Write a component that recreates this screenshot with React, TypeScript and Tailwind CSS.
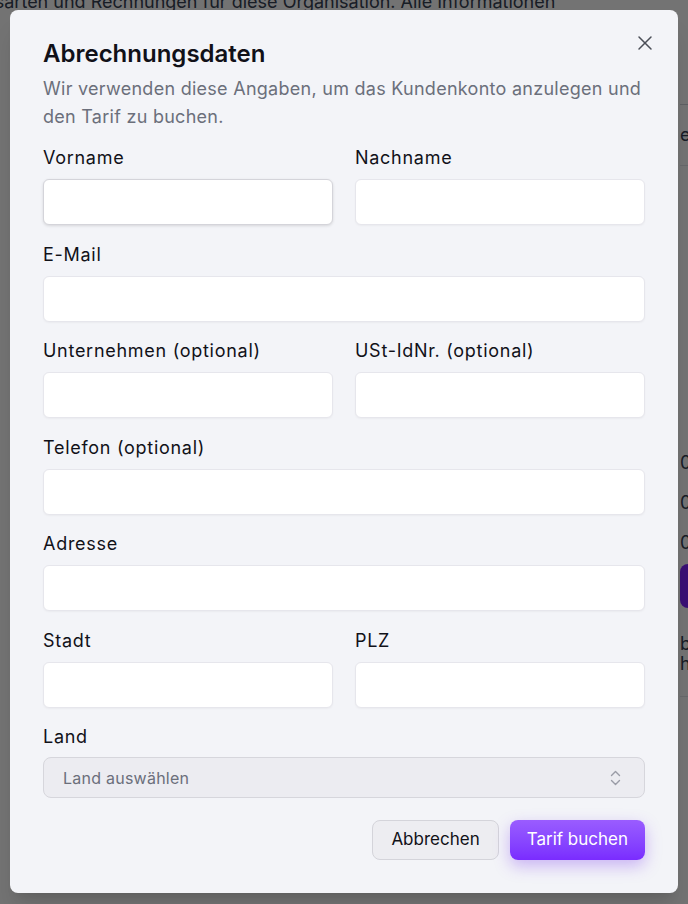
import { X } from "lucide-react";

function Field({ label, focused }: { label: string; focused?: boolean }) {
  return (
    <label className="flex flex-col gap-[7px]">
      <span className="text-lg leading-7 tracking-[0.04em] text-[#111118]">{label}</span>
      <input
        className={
          "h-[46px] w-full rounded-md bg-white px-3 text-base outline-none " +
          (focused
            ? "border border-[#d4d4da] shadow-[0_1px_3px_rgba(0,0,0,0.12)]"
            : "border border-[#e6e6ec] shadow-[0_1px_2px_rgba(0,0,0,0.04)]")
        }
      />
    </label>
  );
}

export default function App() {
  return (
    <div className="relative h-[904px] overflow-hidden bg-white font-['Inter','Liberation_Sans',sans-serif]">
      {/* page behind the dialog */}
      <div className="flex">
        <div className="w-[600px] shrink-0">
          <p className="-mt-[12px] -ml-[74px] whitespace-nowrap text-lg text-gray-700">
            Zahlungsarten und Rechnungen für diese Organisation. Alle Informationen
          </p>
        </div>
        <aside className="w-[300px] shrink-0 pl-[80px] text-gray-700">
          <div className="h-[105px] border-b border-gray-300" />
          <div className="py-[16px] text-lg leading-7">enthalten</div>
          <div className="border-b border-gray-200" />
          <div className="mt-[277px] flex flex-col">
            <div className="h-10 text-lg leading-10">0€</div>
            <div className="h-10 text-lg leading-10">0€</div>
            <div className="h-10 text-lg leading-10">0€</div>
          </div>
          <div className="mt-[1px] h-11 rounded-lg bg-violet-600" />
          <p className="mt-[26px] text-lg leading-5">
            buchbar
            <br />
            hier
          </p>
          <div className="mt-[22px] border-b border-gray-200" />
        </aside>
      </div>

      <div className="absolute inset-0 bg-black/55" />

      <div
        role="dialog"
        className="absolute left-[10px] top-[10px] h-[883px] w-[668px] rounded-lg bg-[#f3f4f8] px-[33px] pt-7 shadow-xl"
      >
        <button className="absolute right-[21px] top-[21px] text-[#4b4f58]">
          <X size={24} strokeWidth={1.5} />
        </button>

        <h2 className="text-2xl font-semibold leading-8 text-[#111118]">Abrechnungsdaten</h2>
        <p className="mt-[5px] text-lg leading-7 tracking-[0.015em] text-[#6b6f7b]">
          Wir verwenden diese Angaben, um das Kundenkonto anzulegen und den Tarif zu buchen.
        </p>

        <form className="mt-[13px] flex flex-col gap-[15.5px]">
          <div className="grid grid-cols-2 gap-x-[22px]">
            <Field label="Vorname" focused />
            <Field label="Nachname" />
          </div>
          <Field label="E-Mail" />
          <div className="grid grid-cols-2 gap-x-[22px]">
            <Field label="Unternehmen (optional)" />
            <Field label="USt-IdNr. (optional)" />
          </div>
          <Field label="Telefon (optional)" />
          <Field label="Adresse" />
          <div className="grid grid-cols-2 gap-x-[22px]">
            <Field label="Stadt" />
            <Field label="PLZ" />
          </div>
          <div className="flex flex-col gap-[6px]">
            <span className="text-lg leading-7 tracking-[0.04em] text-[#111118]">Land</span>
            <button
              type="button"
              className="flex h-[41px] w-full items-center justify-between rounded-lg border border-[#d6d6dc] bg-[#ececf1] pl-[19px] pr-[23px] text-base tracking-[0.015em] text-[#6b6f7b]"
            >
              <span>Land auswählen</span>
              <svg width="11" height="16" viewBox="0 0 11 16" fill="none" stroke="#9a9ca6" strokeWidth="1.4" strokeLinecap="round" strokeLinejoin="round">
                <path d="M1.5 5.5 5.5 1.5 9.5 5.5" />
                <path d="M1.5 10.5 5.5 14.5 9.5 10.5" />
              </svg>
            </button>
          </div>
        </form>

        <div className="mt-[22px] flex justify-end gap-[11px]">
          <button className="h-10 rounded-lg border border-[#d4d4da] bg-[#ededf1] px-[18px] text-[17px] text-[#111118]">
            Abbrechen
          </button>
          <button className="h-10 rounded-lg bg-gradient-to-b from-[#9a5cff] to-[#7a2bff] px-[17px] text-[17px] text-white shadow-[0_6px_16px_rgba(124,58,237,0.35)]">
            Tarif buchen
          </button>
        </div>
      </div>
    </div>
  );
}
